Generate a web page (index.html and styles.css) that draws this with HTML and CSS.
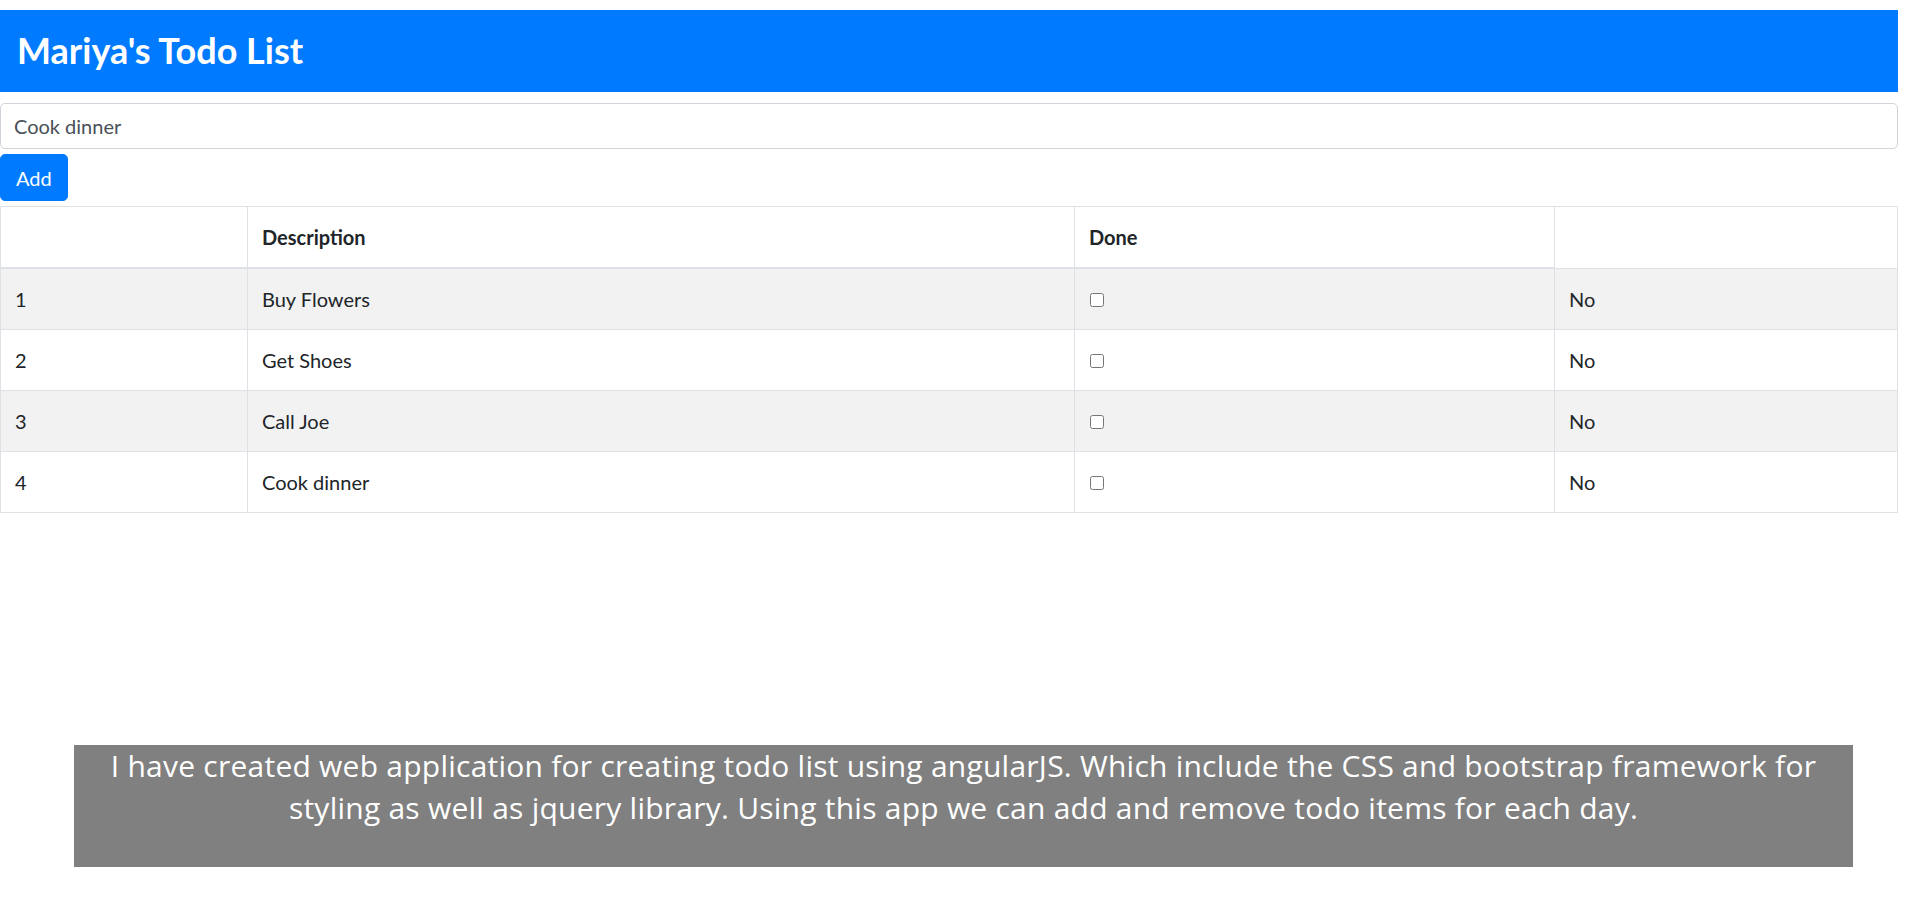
FILE: index.html
```html
<!DOCTYPE html>
<html lang="en">
<head>
<meta charset="utf-8">
<title>Mariya's Todo List</title>
<link rel="stylesheet" href="styles.css">
</head>
<body>
<div class="page">
  <header class="app-header">
    <h1 class="app-title">Mariya's Todo List</h1>
  </header>
  <form class="add-form">
    <input class="todo-input" type="text" value="Cook dinner">
    <button class="btn-add" type="button">Add</button>
  </form>
  <table class="todo-table">
    <colgroup>
      <col class="col-num">
      <col class="col-desc">
      <col class="col-done">
      <col class="col-status">
    </colgroup>
    <thead>
      <tr>
        <th></th>
        <th>Description</th>
        <th>Done</th>
      </tr>
    </thead>
    <tbody>
      <tr><td>1</td><td>Buy Flowers</td><td><input class="chk" type="checkbox"></td><td>No</td></tr>
      <tr><td>2</td><td>Get Shoes</td><td><input class="chk" type="checkbox"></td><td>No</td></tr>
      <tr><td>3</td><td>Call Joe</td><td><input class="chk" type="checkbox"></td><td>No</td></tr>
      <tr><td>4</td><td>Cook dinner</td><td><input class="chk" type="checkbox"></td><td>No</td></tr>
    </tbody>
  </table>
  <div class="about">
    <p class="about-text">I have created web application for creating todo list using angularJS. Which include the CSS and bootstrap framework for<br>styling as well as jquery library. Using this app we can add and remove todo items for each day.</p>
  </div>
</div>
</body>
</html>
```

FILE: styles.css
```css
* { box-sizing: border-box; }

html, body {
  margin: 0;
  padding: 0;
  background: #ffffff;
}

body {
  font-family: Lato, "Open Sans", "Liberation Sans", sans-serif;
  font-size: 20px;
  line-height: 1.5;
  color: #212529;
}

.page {
  margin: 10px 9px 0 0;
}

.app-header {
  background: #007bff;
  height: 82px;
  display: flex;
  align-items: center;
  padding-left: 17px;
}

.app-title {
  margin: 0;
  color: #ffffff;
  font-size: 36px;
  font-weight: 700;
  line-height: 1.2;
}

.add-form {
  margin: 11px 0 0;
  display: flex;
  flex-direction: column;
  align-items: flex-start;
  gap: 5px;
}

.todo-input {
  display: block;
  width: 100%;
  height: 46px;
  padding: 0 13px;
  border: 1px solid #ced4da;
  border-radius: 5px;
  font-family: inherit;
  font-size: 20px;
  color: #495057;
  background: #ffffff;
}

.btn-add {
  height: 47px;
  padding: 0 15px;
  border: 1px solid #007bff;
  border-radius: 5px;
  background: #007bff;
  color: #ffffff;
  font-family: inherit;
  font-size: 20px;
  line-height: 1.5;
}

.todo-table {
  margin-top: 5px;
  width: 100%;
  border-collapse: collapse;
  border: 1px solid #dee2e6;
  table-layout: fixed;
}

.col-num { width: 247px; }
.col-desc { width: 827px; }
.col-done { width: 480px; }
.col-status { width: auto; }

.todo-table th,
.todo-table td {
  padding: 15px 15px 15px 14px;
  text-align: left;
  vertical-align: top;
  border: 1px solid #dee2e6;
}

.todo-table th {
  font-weight: 700;
  border-bottom: 2px solid #dee2e6;
}

.todo-table tbody tr:nth-child(odd) {
  background: #f2f2f2;
}

.chk {
  width: 14px;
  height: 14px;
  margin: 0 0 2px 1px;
  vertical-align: baseline;
}

.about {
  margin: 232px 45px 0 74px;
  height: 122px;
  background: #808080;
}

.about-text {
  margin: 0;
  color: #ffffff;
  text-align: center;
  font-family: "Open Sans", "DejaVu Sans", sans-serif;
  font-size: 30px;
  line-height: 42px;
  letter-spacing: 0.24px;
}
```
